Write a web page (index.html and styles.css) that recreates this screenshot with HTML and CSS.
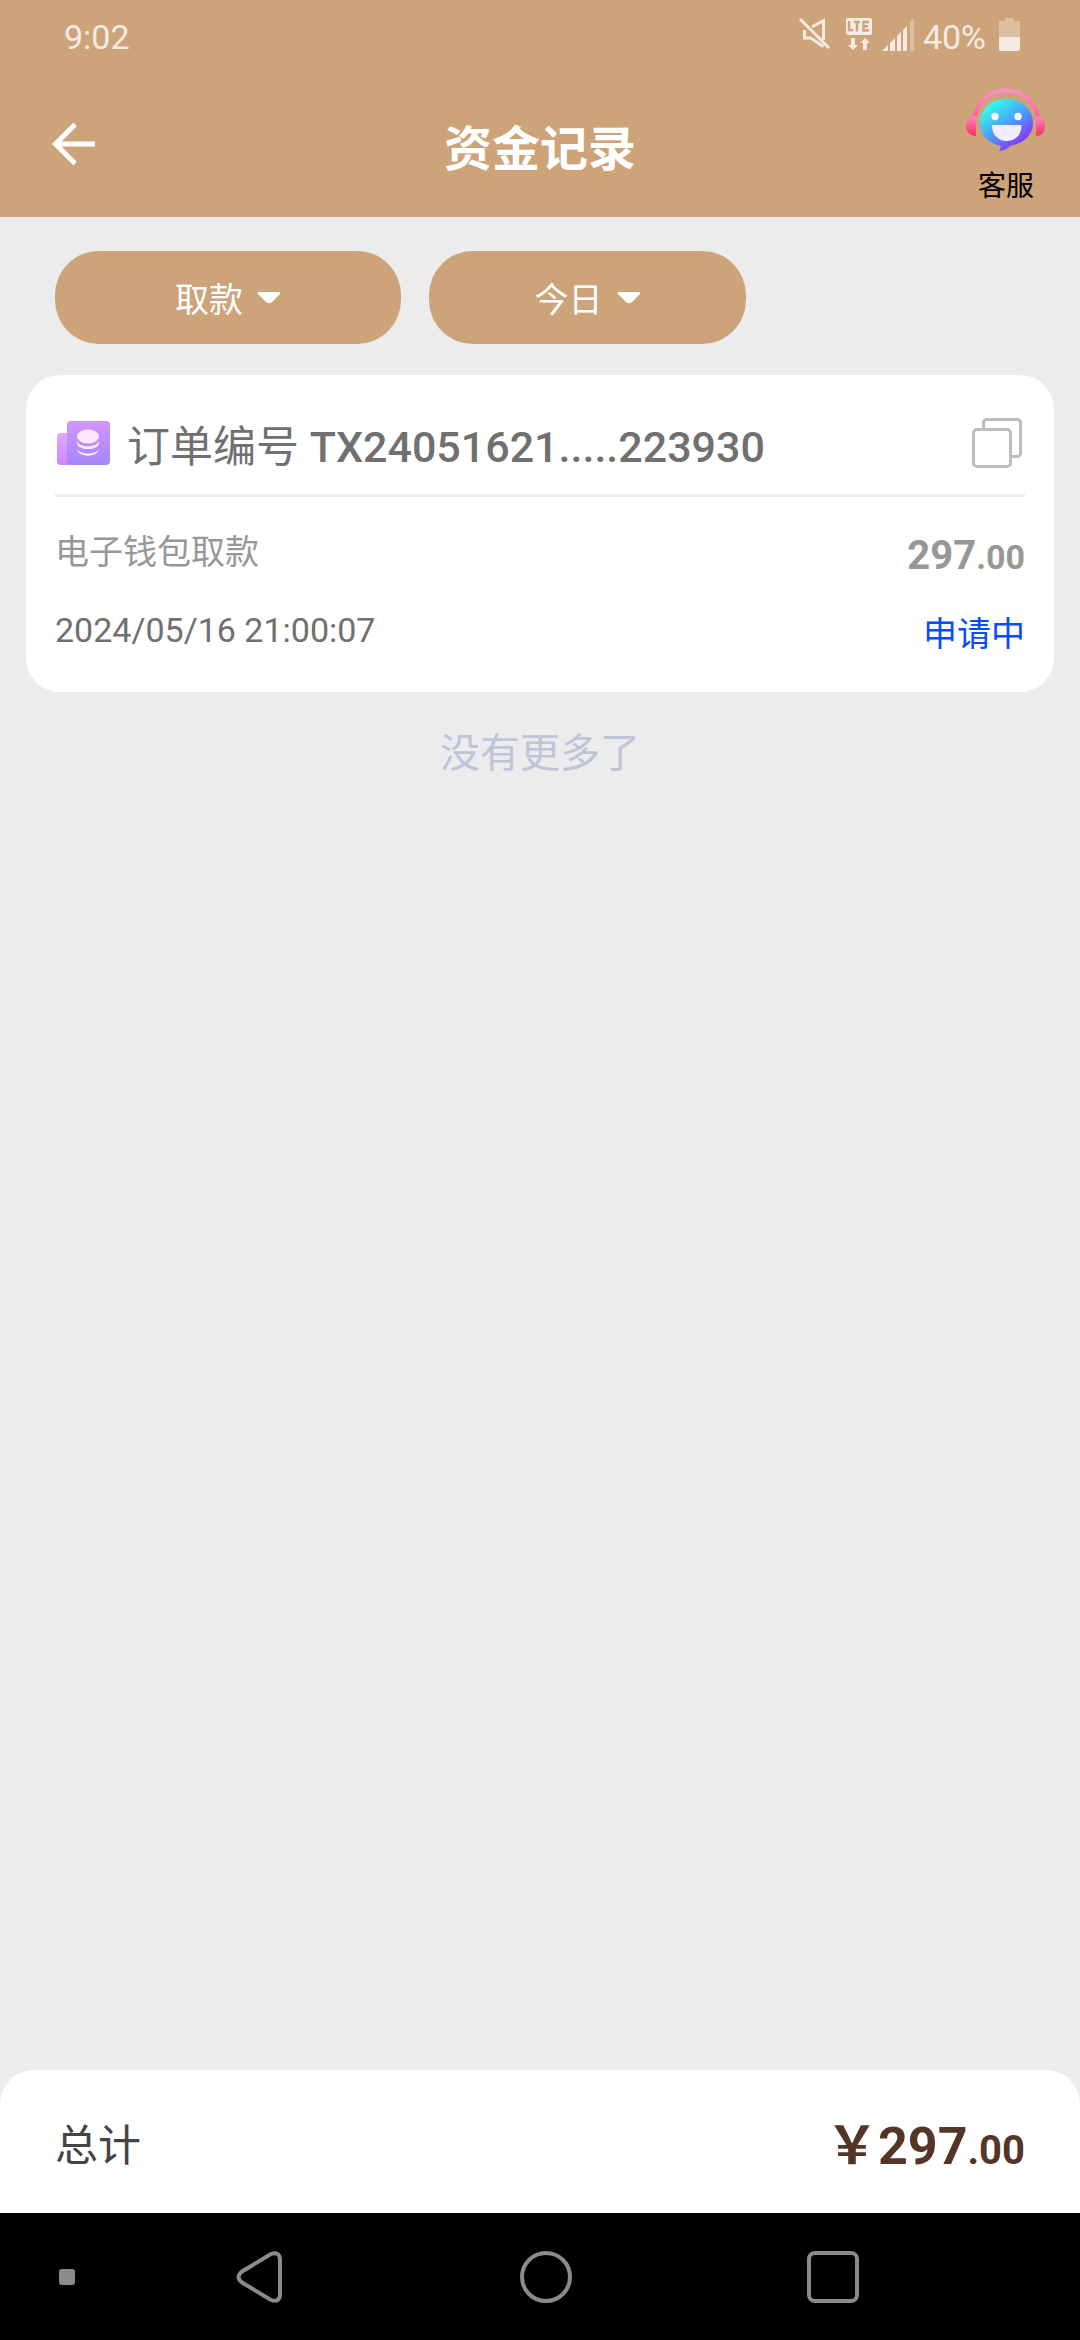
FILE: index.html
```html
<!DOCTYPE html>
<html lang="zh-CN">
<head>
<meta charset="utf-8">
<meta name="viewport" content="width=device-width, initial-scale=1">
<title>资金记录</title>
<link rel="stylesheet" href="styles.css">
</head>
<body>
<div class="screen">
  <header class="top">
    <div class="status">
      <span class="status-time">9:02</span>
      <div class="status-icons">
        <svg class="mute-icon" width="32" height="34" viewBox="0 0 32 34" fill="none" stroke="currentColor" stroke-width="3">
          <path d="M13 10 24.500 3.500V23M5.500 13v8h6l13 8.500"/>
          <path d="M1 2 30 31"/>
        </svg>
        <svg class="lte-icon" width="28" height="34" viewBox="0 0 28 34" fill="currentColor">
          <rect x="1" y="1" width="26" height="17" rx="2"/>
          <path d="M4 4v9h4M9 5h6M12 5v9.500M24 5h-5.500v8.500H24M18.500 9.200H23" fill="none" stroke="#cda37a" stroke-width="2.400"/>
          <path d="M6 21h4v7h3l-5 5-5-5h3zM18 33h4v-7h3l-5-5-5 5h3z"/>
        </svg>
        <svg class="signal-icon" width="34" height="34" viewBox="0 0 34 34" fill="currentColor">
          <path d="M1 34 7 28v6zM9 26l5-5v13H9zM16 19l4-4v19h-4zM22 13l4-4v25h-4z"/>
          <path d="M29 5l4-4v33h-4z" opacity=".4"/>
        </svg>
        <span class="battery-level">40%</span>
        <svg class="battery-icon" width="22" height="34" viewBox="0 0 22 34" fill="currentColor">
          <path d="M1 20V4h6V1h9v3h6v16z" opacity=".4"/>
          <path d="M1 20h21v12q0 2-2 2H3q-2 0-2-2z"/>
        </svg>
      </div>
    </div>
    <div class="titlebar">
      <button class="back" type="button" aria-label="返回">
        <svg width="44" height="44" viewBox="0 0 44 44" fill="none" stroke="#fff" stroke-width="5">
          <path d="M43 22H5M23 2.500 3.500 22 23 41.500"/>
        </svg>
      </button>
      <h1 class="title">资金记录</h1>
      <a class="support" href="#support">
        <svg width="80" height="64" viewBox="0 0 80 64">
          <defs>
            <linearGradient id="band" x1="0" y1="0" x2="0" y2="1"><stop offset="0" stop-color="#ff90c4"/><stop offset="1" stop-color="#fb5f93"/></linearGradient>
            <linearGradient id="ear" x1="0" y1="0" x2="0" y2="1"><stop offset="0" stop-color="#ff86bb"/><stop offset="1" stop-color="#fc2f63"/></linearGradient>
            <linearGradient id="face" x1=".2" y1=".1" x2=".8" y2=".9"><stop offset="0" stop-color="#36f9ea"/><stop offset=".5" stop-color="#4d9bf9"/><stop offset="1" stop-color="#8a2bfb"/></linearGradient>
          </defs>
          <path d="M8.500 29C12 13 24 2.500 40 2.500S69 13 72 29" fill="none" stroke="url(#band)" stroke-width="4"/>
          <path d="M10 28v20C4 48 0 44 0 38s4-10 10-10zM70 28v20c6 0 9-4 9-10s-3-10-9-10z" fill="url(#ear)"/>
          <path d="M40 11C25 11 14 21 14 35c0 12 8 20 21 23l-2 5.500c5-1 9-3 12-6C58 55 67 47 67 35 67 21 55 11 40 11z" fill="url(#face)"/>
          <circle cx="29" cy="28.500" r="3.700" fill="#f4f7ff"/>
          <circle cx="52" cy="28.500" r="3.700" fill="#f4f7ff"/>
          <path d="M26 37h29.500c0 10-6 16-14.500 16S26 47 26 37z" fill="#f1edff"/>
        </svg>
        <span class="support-label">客服</span>
      </a>
    </div>
  </header>

  <main class="content">
    <div class="filters">
      <button class="filter filter-type" type="button"><span class="filter-label">取款</span>
        <svg width="24" height="12" viewBox="0 0 24 12" fill="#fff"><path d="M1.500 0h21q1.500.500.500 2L15 10q-3 2.500-6 0L1 2Q0 .500 1.500 0z"/></svg>
      </button>
      <button class="filter filter-date" type="button"><span class="filter-label">今日</span>
        <svg width="24" height="12" viewBox="0 0 24 12" fill="#fff"><path d="M1.500 0h21q1.500.500.500 2L15 10q-3 2.500-6 0L1 2Q0 .500 1.500 0z"/></svg>
      </button>
    </div>

    <article class="card">
      <div class="card-head">
        <svg class="order-icon" width="54" height="44" viewBox="0 0 54 44">
          <defs>
            <linearGradient id="front" x1="0" y1="0" x2="0" y2="1"><stop offset="0" stop-color="#d296fd"/><stop offset="1" stop-color="#a586f8"/></linearGradient>
            <linearGradient id="rear" x1="0" y1="0" x2="0" y2="1"><stop offset="0" stop-color="#e0a9fa"/><stop offset="1" stop-color="#d184fd"/></linearGradient>
          </defs>
          <path d="M4 12h12v32H4q-4 0-4-4V16q0-4 4-4z" fill="url(#rear)"/>
          <rect x="10" y="0" width="43" height="44" rx="4" fill="url(#front)"/>
          <g fill="#fde8fd">
            <ellipse cx="31" cy="15.500" rx="11" ry="7"/>
            <path d="M20 20c3 7 19 7 22 0v2c0 8-22 8-22 0zM20 28c3 6 19 6 22 0-1 9-21 9-22 0z"/>
          </g>
        </svg>
        <h2 class="order">订单编号 <span class="order-no">TX24051621.....223930</span></h2>
        <button class="copy" type="button" aria-label="复制">
          <svg width="50" height="50" viewBox="0 0 50 50" fill="none" stroke="#bdbdbd" stroke-width="3">
            <path d="M11.500 11V5q0-3.500 3.500-3.500h30q3.500 0 3.500 3.500v30q0 3.500-3.500 3.500h-6"/>
            <rect x="1.500" y="11.500" width="37" height="37" rx="3.500"/>
          </svg>
        </button>
      </div>
      <div class="card-body">
        <div class="row">
          <span class="kind">电子钱包取款</span>
          <strong class="amount">297<span class="cents">.00</span></strong>
        </div>
        <div class="row">
          <time class="date" datetime="2024-05-16T21:00:07">2024/05/16 21:00:07</time>
          <span class="state">申请中</span>
        </div>
      </div>
    </article>
    <p class="end">没有更多了</p>
  </main>

  <footer class="total">
    <span class="total-label">总计</span>
    <strong class="total-sum">￥297<span class="total-cents">.00</span></strong>
  </footer>

  <nav class="sysnav" aria-label="系统导航">
    <span class="dot"></span>
    <button type="button" aria-label="返回上一页">
      <svg width="46" height="52" viewBox="0 0 46 52" fill="none" stroke="#8b8b8b" stroke-width="4">
        <path d="M35 3 6 20.500q-7 5.500 0 11L35 49q8 3 9-5V8q-1-8-9-5z"/>
      </svg>
    </button>
    <button type="button" aria-label="主屏幕">
      <svg width="52" height="52" viewBox="0 0 52 52" fill="none" stroke="#8b8b8b" stroke-width="4"><circle cx="26" cy="26" r="24"/></svg>
    </button>
    <button type="button" aria-label="最近任务">
      <svg width="52" height="52" viewBox="0 0 52 52" fill="none" stroke="#8b8b8b" stroke-width="4"><rect x="2" y="2" width="48" height="48" rx="6"/></svg>
    </button>
  </nav>
</div>
</body>
</html>
```
FILE: styles.css
```css
* { box-sizing: border-box; }

body {
  margin: 0;
  background: #ececec;
  font-family: Roboto, "Noto Sans CJK SC", sans-serif;
  font-size: 34px;
  line-height: 40px;
  color: #707070;
}

svg { display: block; flex: none; }

button {
  margin: 0;
  padding: 0;
  border: 0;
  background: none;
  font: inherit;
  color: inherit;
}

.screen {
  display: flex;
  flex-direction: column;
  min-height: 100vh;
}

.top { background: #cda37a; }

.status {
  display: flex;
  justify-content: space-between;
  padding: 17px 60px 0 64px;
  color: #f5ebe3;
}

.status-icons { display: flex; }
.lte-icon { margin-left: 14px; }
.signal-icon { margin: 0 8px; }
.battery-icon { margin-left: 12px; }

.titlebar {
  display: grid;
  grid-template-columns: 1fr auto 1fr;
  align-items: start;
  height: 160px;
  padding: 31px 34px 0 52px;
}

.back { justify-self: start; margin-top: 34px; }

.title {
  margin: 30px 0 0 -18px;
  font-size: 48px;
  line-height: 64px;
  font-weight: 700;
  color: #fff;
}

.support {
  display: flex;
  flex-direction: column;
  align-items: center;
  justify-self: end;
  gap: 15px;
  color: #000;
  text-decoration: none;
}

.support-label { font-size: 28px; line-height: 40px; }

.content { flex: 1; padding: 34px 26px; }

.filters {
  display: flex;
  gap: 28px;
  padding: 0 29px;
  margin-bottom: 31px;
}

.filter {
  display: flex;
  align-items: center;
  justify-content: center;
  gap: 14px;
  height: 93px;
  border-radius: 44px;
  background: #cda37a;
  color: #fff;
}

.filter-label { padding-top: 4px; }
.filter-type { width: 346px; }
.filter-date { width: 317px; }

.card {
  border-radius: 34px;
  padding: 0 29px;
  background: #fff;
}

.card-head {
  display: flex;
  align-items: center;
  height: 122px;
  padding: 16px 3px 0 2px;
  border-bottom: 3px solid #ececec;
}

.order {
  flex: 1;
  margin: 0 0 0 16px;
  padding-top: 8px;
  font-size: 43px;
  line-height: 56px;
  font-weight: 400;
}

.order-no { font-weight: 500; }

.card-body { padding: 18px 0 21px; }

.row {
  display: flex;
  align-items: center;
  justify-content: space-between;
  height: 78px;
}

.kind, .date { padding-bottom: 4px; }
.amount, .state { padding-top: 4px; }

.kind, .amount { color: #979797; }
.amount { font-size: 40px; }
.cents { font-size: 34px; }
.state { color: #0a4bff; }

.end {
  margin: 42px 0 0;
  text-align: center;
  font-size: 40px;
  color: #c0c4d8;
}

.total {
  display: flex;
  align-items: center;
  justify-content: space-between;
  height: 143px;
  padding: 8px 55px 0;
  border-radius: 34px 34px 0 0;
  background: #fff;
  font-size: 43px;
  line-height: 64px;
}

.total-label { color: #444; }
.total-sum { padding-top: 6px; font-size: 52px; color: #543629; }
.total-cents { font-size: 40px; }

.sysnav {
  display: grid;
  grid-template-columns: 96px repeat(3, 1fr);
  place-items: center;
  height: 127px;
  padding: 0 103px 0 19px;
  background: #000;
}

.dot {
  width: 16px;
  height: 16px;
  border-radius: 3px;
  background: #8b8b8b;
}
```
